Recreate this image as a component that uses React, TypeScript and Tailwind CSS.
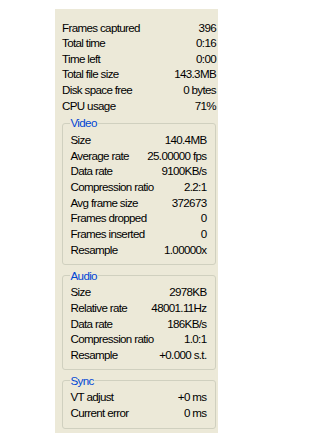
import React from "react";

type Row = [string, string];

const top: Row[] = [
  ["Frames captured", "396"],
  ["Total time", "0:16"],
  ["Time left", "0:00"],
  ["Total file size", "143.3MB"],
  ["Disk space free", "0 bytes"],
  ["CPU usage", "71%"],
];

const video: Row[] = [
  ["Size", "140.4MB"],
  ["Average rate", "25.00000 fps"],
  ["Data rate", "9100KB/s"],
  ["Compression ratio", "2.2:1"],
  ["Avg frame size", "372673"],
  ["Frames dropped", "0"],
  ["Frames inserted", "0"],
  ["Resample", "1.00000x"],
];

const audio: Row[] = [
  ["Size", "2978KB"],
  ["Relative rate", "48001.11Hz"],
  ["Data rate", "186KB/s"],
  ["Compression ratio", "1.0:1"],
  ["Resample", "+0.000 s.t."],
];

const sync: Row[] = [
  ["VT adjust", "+0 ms"],
  ["Current error", "0 ms"],
];

function Rows({ rows }: { rows: Row[] }) {
  return (
    <div className="flex flex-col">
      {rows.map(([k, v], i) => (
        <div key={i} className="flex justify-between h-[15.67px] leading-[15.67px] whitespace-nowrap">
          <span>{k}</span>
          <span>{v}</span>
        </div>
      ))}
    </div>
  );
}

function Group({ title, rows, className }: { title: string; rows: Row[]; className?: string }) {
  return (
    <div className={"relative border border-[#d0d0bf] rounded-[3px] pl-[7.5px] pr-[8px] pt-[8px] pb-[7px] " + (className ?? "")}>
      <span className="absolute left-[6.5px] top-[-8.5px] px-[1px] bg-[#ece9d8] text-[#0046d5] leading-[15.67px]">
        {title}
      </span>
      <Rows rows={rows} />
    </div>
  );
}

export default function App() {
  return (
    <div className="w-[332px] h-[442px] bg-white pt-[9px] pl-[55px]">
      <div
        className="w-[163px] h-[424px] bg-[#ece9d8] pl-[7px] pr-[2px] pt-[10.5px] text-[11.6px] tracking-[-0.65px] text-black"
        style={{ fontFamily: '"Liberation Sans", Arial, sans-serif' }}
      >
        <Rows rows={top} />
        <Group title="Video" rows={video} className="mt-[9.5px] mr-[0.5px]" />
        <Group title="Audio" rows={audio} className="mt-[10px] mr-[0.5px]" />
        <Group title="Sync" rows={sync} className="mt-[10px] mr-[0.5px]" />
      </div>
    </div>
  );
}
